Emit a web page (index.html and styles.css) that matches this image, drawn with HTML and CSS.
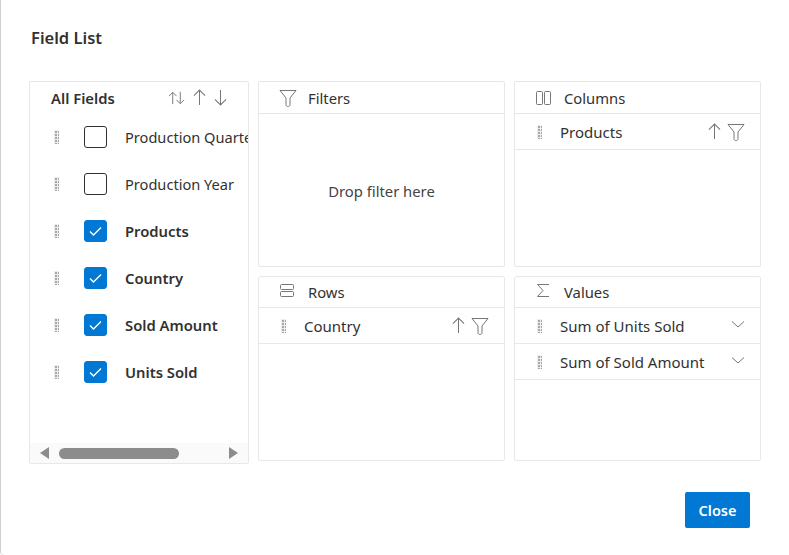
FILE: index.html
```html
<!DOCTYPE html>
<html lang="en">
<head>
    <meta charset="UTF-8">
    <title>Field List</title>
    <link rel="stylesheet" href="styles.css">
</head>
<body>
    <svg class="icon-defs" aria-hidden="true">
        <symbol id="i-filter" viewBox="0 0 18 18"><path d="M1 1.5h16L11 9v6.5c0 1.5-1 2-2 2s-2-.5-2-2V9z" fill="none" stroke="currentColor"/></symbol>
        <symbol id="i-up" viewBox="0 0 14 18"><path d="M7 17V1M1 7l6-6 6 6" fill="none" stroke="currentColor" stroke-width="1.1"/></symbol>
        <symbol id="i-down" viewBox="0 0 14 18"><path d="M7 1v16M1 11l6 6 6-6" fill="none" stroke="currentColor" stroke-width="1.1"/></symbol>
        <symbol id="i-chevron" viewBox="0 0 14 7"><path d="M1 .5l6 5.5 6-5.5" fill="none" stroke="currentColor"/></symbol>
        <symbol id="i-check" viewBox="0 0 23 22"><path d="M6 11.5l3.5 3.5L17 7.5" fill="none" stroke="#fff" stroke-width="1.4"/></symbol>
    </svg>

    <div class="dialog">
        <h1 class="title">Field List</h1>

        <div class="board">
            <section class="card fields">
                <div class="fields-head">
                    <span class="fields-title">All Fields</span>
                    <span class="sort-icons">
                        <svg class="sort-both" viewBox="0 0 18 14"><path d="M5 13.5V1M1 5l4-4 4 4M13 .5V13M9 9l4 4 4-4" fill="none" stroke="currentColor"/></svg>
                        <svg class="arrow"><use href="#i-up"/></svg>
                        <svg class="arrow"><use href="#i-down"/></svg>
                    </span>
                </div>
                <ul class="field-list">
                    <li class="field"><i class="grip"></i><span class="box"></span><span class="field-name">Production Quarter</span></li>
                    <li class="field"><i class="grip"></i><span class="box"></span><span class="field-name">Production Year</span></li>
                    <li class="field on"><i class="grip"></i><span class="box"><svg><use href="#i-check"/></svg></span><span class="field-name">Products</span></li>
                    <li class="field on"><i class="grip"></i><span class="box"><svg><use href="#i-check"/></svg></span><span class="field-name">Country</span></li>
                    <li class="field on"><i class="grip"></i><span class="box"><svg><use href="#i-check"/></svg></span><span class="field-name">Sold Amount</span></li>
                    <li class="field on"><i class="grip"></i><span class="box"><svg><use href="#i-check"/></svg></span><span class="field-name">Units Sold</span></li>
                </ul>
                <div class="scrollbar">
                    <span class="arrow-left"></span>
                    <span class="track"><span class="thumb"></span></span>
                    <span class="arrow-right"></span>
                </div>
            </section>

            <section class="card">
                <div class="card-head">
                    <svg class="head-icon"><use href="#i-filter"/></svg>
                    <span>Filters</span>
                </div>
                <div class="drop-hint">Drop filter here</div>
            </section>

            <section class="card">
                <div class="card-head">
                    <svg class="head-icon" viewBox="0 0 18 18"><rect x="1.5" y="2.5" width="6" height="13" rx="1" fill="none" stroke="currentColor"/><rect x="9.5" y="2.5" width="6" height="13" rx="1" fill="none" stroke="currentColor"/></svg>
                    <span>Columns</span>
                </div>
                <div class="pill">
                    <i class="grip"></i>
                    <span class="pill-name">Products</span>
                    <svg class="arrow"><use href="#i-up"/></svg>
                    <svg class="pill-filter"><use href="#i-filter"/></svg>
                </div>
            </section>

            <section class="card">
                <div class="card-head low">
                    <svg class="head-icon" viewBox="0 0 18 18"><rect x="1.5" y="1.5" width="13" height="5" rx="1" fill="none" stroke="currentColor"/><rect x="1.5" y="8.5" width="13" height="5" rx="1" fill="none" stroke="currentColor"/></svg>
                    <span>Rows</span>
                </div>
                <div class="pill">
                    <i class="grip"></i>
                    <span class="pill-name">Country</span>
                    <svg class="arrow"><use href="#i-up"/></svg>
                    <svg class="pill-filter"><use href="#i-filter"/></svg>
                </div>
            </section>

            <section class="card">
                <div class="card-head low">
                    <svg class="head-icon" viewBox="0 0 18 18"><path d="M14 1.5H2.5L8 7.5l-5.5 6H14" fill="none" stroke="currentColor"/></svg>
                    <span>Values</span>
                </div>
                <div class="pill">
                    <i class="grip"></i>
                    <span class="pill-name">Sum of Units Sold</span>
                    <svg class="chevron"><use href="#i-chevron"/></svg>
                </div>
                <div class="pill">
                    <i class="grip"></i>
                    <span class="pill-name">Sum of Sold Amount</span>
                    <svg class="chevron"><use href="#i-chevron"/></svg>
                </div>
            </section>
        </div>

        <div class="actions">
            <button class="close-btn">Close</button>
        </div>
    </div>
</body>
</html>
```

FILE: styles.css
```css
* {
    box-sizing: border-box;
}

html, body {
    height: 100%;
}

body {
    margin: 0;
    background: #fff;
    font-family: "Noto Sans", "Open Sans", sans-serif;
    font-size: 14.8px;
    color: #323130;
    overflow: hidden;
}

.icon-defs {
    display: none;
}

.dialog {
    height: 100%;
    padding: 27px 28px 0 28px;
    background: #fff;
    border-left: 1px solid #cfcfcf;
    border-bottom-left-radius: 4px;
}

.title {
    margin: 0 0 32px 2px;
    font-size: 16.5px;
    line-height: 22px;
    font-weight: 600;
}

.board {
    display: grid;
    grid-template-columns: 220px 247px 247px;
    grid-template-rows: 186px 185px;
    gap: 9px;
}

.card {
    border: 1px solid #e8e8e8;
    border-radius: 2px;
    background: #fff;
}

/* left column with all the fields */
.fields {
    grid-row: 1 / 3;
    height: 383px;
    display: flex;
    flex-direction: column;
    overflow: hidden;
}

.fields-head {
    display: flex;
    justify-content: space-between;
    align-items: center;
    height: 31px;
    padding: 0 21px 0 21px;
    flex-shrink: 0;
}

.fields-title {
    font-weight: 600;
}

.sort-icons {
    display: flex;
    align-items: center;
    gap: 8px;
    color: #777;
}

.sort-both {
    width: 17px;
    height: 14px;
}

.arrow {
    width: 13px;
    height: 17px;
    color: #777;
    flex-shrink: 0;
}

.field-list {
    flex: 1;
    margin: 0;
    padding: 0;
    list-style: none;
    overflow: hidden;
}

.field {
    display: flex;
    align-items: center;
    height: 47px;
    padding-left: 24px;
    white-space: nowrap;
    font-size: 14.6px;
}

.on {
    font-size: 14.8px;
}

.grip {
    display: block;
    width: 5px;
    height: 14px;
    flex-shrink: 0;
    background:
        linear-gradient(#ededed 1px, transparent 1px) 0 0 / 3px 3px,
        linear-gradient(90deg, #ededed 1px, transparent 1px) 0 0 / 3px 3px,
        #a8a8a8;
}

.box {
    display: block;
    width: 23px;
    height: 22px;
    margin-left: 25px;
    border: 1px solid #323130;
    border-radius: 3px;
    flex-shrink: 0;
}

.box svg {
    display: block;
    width: 23px;
    height: 22px;
    margin: -1px;
}

.on .box {
    background: #0078d4;
    border-color: #0078d4;
}

.field-name {
    margin-left: 18px;
}

.on .field-name {
    font-weight: 600;
}

.scrollbar {
    display: flex;
    align-items: center;
    height: 20px;
    padding: 0 10px 0 10px;
    background: #fafafa;
    flex-shrink: 0;
}

.arrow-left {
    width: 0;
    height: 0;
    border: 6px solid transparent;
    border-left: 0;
    border-right: 9px solid #8c8c8c;
}

.arrow-right {
    width: 0;
    height: 0;
    border: 6px solid transparent;
    border-right: 0;
    border-left: 9px solid #8c8c8c;
}

.track {
    flex: 1;
    padding-left: 10px;
}

.thumb {
    display: block;
    width: 120px;
    height: 11px;
    border-radius: 6px;
    background: #8c8c8c;
}

/* the four drop areas */
.card-head {
    display: flex;
    align-items: center;
    gap: 11px;
    height: 32px;
    padding-left: 20px;
    border-bottom: 1px solid #e8e8e8;
}

.card-head.low {
    height: 31px;
}

.head-icon {
    width: 18px;
    height: 18px;
    color: #777;
    flex-shrink: 0;
}

.drop-hint {
    display: flex;
    justify-content: center;
    align-items: center;
    height: 154px;
    color: #444;
}

.pill {
    display: flex;
    align-items: center;
    height: 36px;
    padding: 0 15px 0 22px;
    border-bottom: 1px solid #e8e8e8;
    font-size: 15px;
}

.pill-name {
    flex: 1;
    margin-left: 18px;
}

.pill-filter {
    width: 18px;
    height: 18px;
    margin-left: 6px;
    color: #777;
}

.chevron {
    width: 14px;
    height: 7px;
    margin-bottom: 3px;
    color: #777;
}

.actions {
    display: flex;
    justify-content: flex-end;
    padding: 31px 11px 0 0;
}

.close-btn {
    width: 65px;
    height: 36px;
    border: 0;
    border-radius: 2px;
    background: #0078d4;
    color: #fff;
    font-family: inherit;
    font-size: 14.5px;
    font-weight: 600;
}
```
